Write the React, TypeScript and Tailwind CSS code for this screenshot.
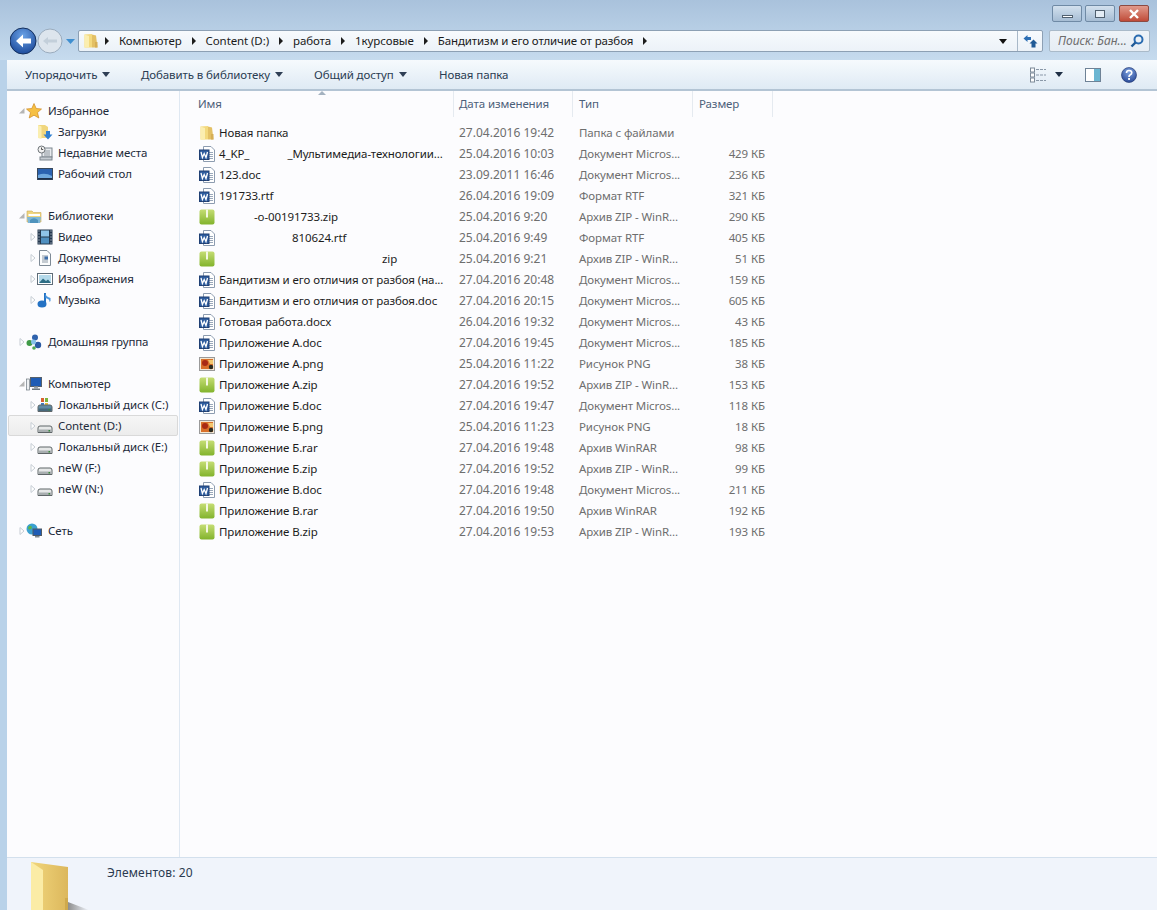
import React from "react";

type FileRow = {
  icon: "folder" | "word" | "zip" | "png";
  name: React.ReactNode;
  date: string;
  kind: string;
  size: string;
};

const WORD = "Документ Micros...";
const ZIP = "Архив ZIP - WinR...";
const RAR = "Архив WinRAR";
const PNG = "Рисунок PNG";

const FILES: FileRow[] = [
  { icon: "folder", name: "Новая папка", date: "27.04.2016 19:42", kind: "Папка с файлами", size: "" },
  {
    icon: "word",
    name: (
      <>
        4_KP_<span className="inline-block w-[38px]" />
        _Мультимедиа-технологии...
      </>
    ),
    date: "25.04.2016 10:03",
    kind: WORD,
    size: "429 КБ",
  },
  { icon: "word", name: "123.doc", date: "23.09.2011 16:46", kind: WORD, size: "236 КБ" },
  { icon: "word", name: "191733.rtf", date: "26.04.2016 19:09", kind: "Формат RTF", size: "321 КБ" },
  {
    icon: "zip",
    name: (
      <>
        <span className="inline-block w-[35px]" />
        -o-00191733.zip
      </>
    ),
    date: "25.04.2016 9:20",
    kind: ZIP,
    size: "290 КБ",
  },
  {
    icon: "word",
    name: (
      <>
        <span className="inline-block w-[73px]" />
        810624.rtf
      </>
    ),
    date: "25.04.2016 9:49",
    kind: "Формат RTF",
    size: "405 КБ",
  },
  {
    icon: "zip",
    name: (
      <>
        <span className="inline-block w-[163px]" />
        zip
      </>
    ),
    date: "25.04.2016 9:21",
    kind: ZIP,
    size: "51 КБ",
  },
  { icon: "word", name: "Бандитизм и его отличия от разбоя (на...", date: "27.04.2016 20:48", kind: WORD, size: "159 КБ" },
  { icon: "word", name: "Бандитизм и его отличия от разбоя.doc", date: "27.04.2016 20:15", kind: WORD, size: "605 КБ" },
  { icon: "word", name: "Готовая работа.docx", date: "26.04.2016 19:32", kind: WORD, size: "43 КБ" },
  { icon: "word", name: "Приложение А.doc", date: "27.04.2016 19:45", kind: WORD, size: "185 КБ" },
  { icon: "png", name: "Приложение А.png", date: "25.04.2016 11:22", kind: PNG, size: "38 КБ" },
  { icon: "zip", name: "Приложение А.zip", date: "27.04.2016 19:52", kind: ZIP, size: "153 КБ" },
  { icon: "word", name: "Приложение Б.doc", date: "27.04.2016 19:47", kind: WORD, size: "118 КБ" },
  { icon: "png", name: "Приложение Б.png", date: "25.04.2016 11:23", kind: PNG, size: "18 КБ" },
  { icon: "zip", name: "Приложение Б.rar", date: "27.04.2016 19:48", kind: RAR, size: "98 КБ" },
  { icon: "zip", name: "Приложение Б.zip", date: "27.04.2016 19:52", kind: ZIP, size: "99 КБ" },
  { icon: "word", name: "Приложение В.doc", date: "27.04.2016 19:48", kind: WORD, size: "211 КБ" },
  { icon: "zip", name: "Приложение В.rar", date: "27.04.2016 19:50", kind: RAR, size: "192 КБ" },
  { icon: "zip", name: "Приложение В.zip", date: "27.04.2016 19:53", kind: ZIP, size: "193 КБ" },
];

function FolderIcon({ size = 16 }: { size?: number }) {
  return (
    <svg width={size} height={size} viewBox="0 0 16 16" className="shrink-0">
      <path d="M1.5 1.5 L9 1 L9 14.5 L1.5 14.5 Z" fill="#f3d97e" />
      <path d="M9 1.5 L13 2.5 L14.5 14.5 L9 14.5 Z" fill="#e3c065" />
      <path d="M1.5 1.5 L6 3 L6 14.5 L1.5 14.5 Z" fill="#fbeeb0" />
      <path d="M12 9 h2.5 v5.5 h-2.5 Z" fill="#d6ae55" />
    </svg>
  );
}

function WordIcon() {
  return (
    <svg width="16" height="16" viewBox="0 0 16 16" className="shrink-0">
      <path d="M4.5 0.5 H12 L15.5 4 V15.5 H4.5 Z" fill="#fff" stroke="#8d9cb0" />
      <path d="M10 6.5h4M10 8.5h4M10 10.5h4M10 12.5h4" stroke="#9aa8ba" />
      <rect x="0.5" y="4" width="9.5" height="9.5" fill="#2f5d9e" stroke="#1f3f73" />
      <path d="M2 6 L3.4 11.5 L5.2 7.5 L7 11.5 L8.5 6" fill="none" stroke="#fff" strokeWidth="1.3" />
    </svg>
  );
}

function ZipIcon() {
  return (
    <svg width="16" height="16" viewBox="0 0 16 16" className="shrink-0">
      <defs>
        <linearGradient id="zipfill" x1="0" y1="0" x2="0" y2="1">
          <stop offset="0" stopColor="#c5dd74" />
          <stop offset="1" stopColor="#82b32c" />
        </linearGradient>
      </defs>
      <rect x="0.5" y="0.5" width="15" height="15" rx="2" fill="url(#zipfill)" />
      <rect x="7" y="0.5" width="2" height="8" fill="#f4f8e4" />
    </svg>
  );
}

function PngIcon() {
  return (
    <svg width="16" height="16" viewBox="0 0 16 16" className="shrink-0">
      <rect x="0.5" y="1.5" width="15" height="13" fill="#f4e7d2" stroke="#9a9a9a" />
      <rect x="2" y="3" width="12" height="10" fill="#d9702a" />
      <circle cx="6" cy="7" r="3" fill="#a82a14" />
      <circle cx="12" cy="11" r="2.2" fill="#2a2a20" />
      <path d="M9 4 h5 v4 h-3 Z" fill="#f3c66d" />
    </svg>
  );
}

function FileIcon({ icon }: { icon: FileRow["icon"] }) {
  if (icon === "folder") return <FolderIcon />;
  if (icon === "word") return <WordIcon />;
  if (icon === "zip") return <ZipIcon />;
  return <PngIcon />;
}

function Caret({ open }: { open?: boolean }) {
  return (
    <svg width="8" height="8" viewBox="0 0 8 8" className="shrink-0">
      {open ? (
        <path d="M1 6.5 L6.5 6.5 L6.5 1 Z" fill="#b5b5b5" />
      ) : (
        <path d="M2 0.5 L6 4 L2 7.5 Z" fill="#fff" stroke="#c6cdd4" />
      )}
    </svg>
  );
}

function Drive({ win }: { win?: boolean }) {
  return (
    <svg width="16" height="16" viewBox="0 0 16 16" className="shrink-0">
      {win && (
        <>
          <path d="M4 1 L7 1 L7 5 L4 5 Z" fill="#d9612f" />
          <path d="M8 1 L11 1 L11 5 L8 5 Z" fill="#7bb33c" />
          <path d="M4 6 L7 6 L7 9 L4 9 Z" fill="#3e7fc4" />
          <path d="M8 6 L11 6 L11 9 L8 9 Z" fill="#e9bf3a" />
        </>
      )}
      <path d="M1 10 Q1 8 3 8 H13 Q15 8 15 10 V14.5 H1 Z" fill={win ? "#5f8aa3" : "#e6e8e8"} stroke="#5f6668" />
      <rect x="1.5" y="11.5" width="13" height="2.5" fill={win ? "#47687c" : "#a8aeb0"} />
      <rect x="11.5" y="12" width="1.5" height="1.5" fill="#3a8a3a" />
    </svg>
  );
}

function TreeGlyph({ name }: { name: string }) {
  switch (name) {
    case "star":
      return (
        <svg width="16" height="16" viewBox="0 0 16 16" className="shrink-0">
          <path d="M8 0.5 L10.2 5.5 L15.5 6 L11.5 9.6 L12.8 15 L8 12.2 L3.2 15 L4.5 9.6 L0.5 6 L5.8 5.5 Z" fill="#f6c044" stroke="#cf8a22" strokeWidth="0.7" />
        </svg>
      );
    case "downloads":
      return (
        <svg width="16" height="16" viewBox="0 0 16 16" className="shrink-0">
          <path d="M1 1 L8 1 L11 3 V14 H1 Z" fill="#f0d67e" />
          <path d="M1 1 L4.5 2.5 V15 L1 14 Z" fill="#faeeb0" />
          <path d="M9 7 H13 V10.5 H15.5 L11 15.5 L6.5 10.5 H9 Z" fill="#2f7fd0" />
        </svg>
      );
    case "recent":
      return (
        <svg width="16" height="16" viewBox="0 0 16 16" className="shrink-0">
          <rect x="5" y="3" width="10" height="9" fill="#e8ebee" stroke="#7d868e" />
          <path d="M7 6h6M7 8h6M7 10h6" stroke="#8f98a0" />
          <rect x="3" y="12" width="12" height="3" fill="#c6ccd2" stroke="#7d868e" />
          <circle cx="4.5" cy="4.5" r="3.5" fill="#f2f2f2" stroke="#6e7478" />
          <path d="M4.5 2.5 V4.5 H6.2" fill="none" stroke="#555" />
        </svg>
      );
    case "desktop":
      return (
        <svg width="16" height="16" viewBox="0 0 16 16" className="shrink-0">
          <rect x="0.5" y="2.5" width="15" height="11" fill="#2b62b0" stroke="#39495c" />
          <path d="M1 9 Q8 6 15 10 V13 H1 Z" fill="#6fa8de" />
          <rect x="1" y="12" width="14" height="1.5" fill="#1d2f4a" />
        </svg>
      );
    case "libraries":
      return (
        <svg width="16" height="16" viewBox="0 0 16 16" className="shrink-0">
          <path d="M1 3 H6 L7.5 4.5 H15 V14 H1 Z" fill="#f0d67e" stroke="#c9a958" strokeWidth="0.6" />
          <path d="M2.5 6 H14 V8 H2.5 Z" fill="#fff" />
          <path d="M1 9 H15 L14 15 H2 Z" fill="#7fb8d8" />
          <path d="M4 15 V12 Q8 8.5 12 12 V15 Z" fill="#4f93bd" />
        </svg>
      );
    case "video":
      return (
        <svg width="16" height="16" viewBox="0 0 16 16" className="shrink-0">
          <rect x="0.5" y="0.5" width="15" height="15" fill="#24384f" />
          <rect x="4" y="1.5" width="8" height="6" fill="#8ec3e8" />
          <rect x="4" y="8.5" width="8" height="6" fill="#4f8fc0" />
          <path d="M1.5 2h1M1.5 5h1M1.5 8h1M1.5 11h1M1.5 14h1M13.5 2h1M13.5 5h1M13.5 8h1M13.5 11h1M13.5 14h1" stroke="#dfe7ee" />
        </svg>
      );
    case "docs":
      return (
        <svg width="16" height="16" viewBox="0 0 16 16" className="shrink-0">
          <path d="M2.5 0.5 H10 L13.5 4 V15.5 H2.5 Z" fill="#fbfcfd" stroke="#7e8a96" />
          <path d="M5 6h6M5 8h6M5 10h6M5 12h6" stroke="#8d99a5" />
          <rect x="7.5" y="6.5" width="3.5" height="3" fill="#3d6da8" />
        </svg>
      );
    case "images":
      return (
        <svg width="16" height="16" viewBox="0 0 16 16" className="shrink-0">
          <rect x="0.5" y="2.5" width="15" height="11" fill="#fff" stroke="#5e6c78" />
          <rect x="2" y="4" width="12" height="8" fill="#b4d9ea" />
          <path d="M2 12 L6 7.5 L9 10 L11 8.5 L14 12 Z" fill="#2e6e86" />
        </svg>
      );
    case "music":
      return (
        <svg width="16" height="16" viewBox="0 0 16 16" className="shrink-0">
          <path d="M8 1 V11" stroke="#2472c4" strokeWidth="2" />
          <ellipse cx="5" cy="12" rx="4.5" ry="3.5" fill="#2472c4" />
          <path d="M8 1 Q9 5 13.5 6 Q14 9 12.5 10 Q13 7 8.5 6 Z" fill="#4b96de" />
        </svg>
      );
    case "home":
      return (
        <svg width="16" height="16" viewBox="0 0 16 16" className="shrink-0">
          <circle cx="9" cy="3.5" r="3" fill="#2f62ad" />
          <circle cx="3.5" cy="9" r="3" fill="#3f9a46" />
          <circle cx="12" cy="11" r="3.2" fill="#2a5aa3" />
          <circle cx="7.5" cy="8" r="2.5" fill="#86c2e8" />
          <circle cx="8" cy="14" r="1.8" fill="#4fa955" />
        </svg>
      );
    case "computer":
      return (
        <svg width="16" height="16" viewBox="0 0 16 16" className="shrink-0">
          <rect x="0.5" y="3" width="3" height="11" fill="#eef0f2" stroke="#6e7880" strokeWidth="0.7" />
          <rect x="4.5" y="1.5" width="11" height="9" fill="#1f5cb5" stroke="#56616c" />
          <rect x="8" y="10.5" width="4" height="2" fill="#9aa3ab" />
          <rect x="6" y="12.5" width="8" height="1.5" fill="#6e7880" />
        </svg>
      );
    case "network":
      return (
        <svg width="16" height="16" viewBox="0 0 16 16" className="shrink-0">
          <circle cx="6" cy="6" r="5.5" fill="#3aa0d0" />
          <path d="M3 3 Q6 2 6 5 Q3 8 2 5 Z" fill="#5cb44a" />
          <rect x="7" y="6" width="8.5" height="6.5" fill="#1f5cb5" stroke="#4e5a66" />
          <rect x="9" y="13" width="4.5" height="1.5" fill="#7e8890" />
        </svg>
      );
    case "drivec":
      return <Drive win />;
    default:
      return <Drive />;
  }
}

function TreeItem({
  label,
  glyph,
  child,
  caret,
  selected,
}: {
  label: string;
  glyph: string;
  child?: boolean;
  caret?: "open" | "closed";
  selected?: boolean;
}) {
  return (
    <div
      className={`flex h-[21px] items-center ${
        selected
          ? "mx-px rounded-[2px] border border-[#d9d9d9] bg-gradient-to-b from-[#f6f6f6] to-[#ececec] pl-[18px]"
          : child
            ? "pl-[20px]"
            : "pl-[9px]"
      }`}
    >
      <span className="flex w-[10px] shrink-0 justify-start pl-[2px]">
        {caret && <Caret open={caret === "open"} />}
      </span>
      <TreeGlyph name={glyph} />
      <span className={`${child ? "ml-[5px]" : "ml-[6px]"} whitespace-nowrap text-[#1d2a3a]`}>{label}</span>
    </div>
  );
}

function Sidebar() {
  return (
    <aside className="w-[173px] shrink-0 border-r border-[#dfe8f2] pt-[9px]">
      <TreeItem label="Избранное" glyph="star" caret="open" />
      <TreeItem label="Загрузки" glyph="downloads" child />
      <TreeItem label="Недавние места" glyph="recent" child />
      <TreeItem label="Рабочий стол" glyph="desktop" child />
      <div className="h-[21px]" />
      <TreeItem label="Библиотеки" glyph="libraries" caret="open" />
      <TreeItem label="Видео" glyph="video" child caret="closed" />
      <TreeItem label="Документы" glyph="docs" child caret="closed" />
      <TreeItem label="Изображения" glyph="images" child caret="closed" />
      <TreeItem label="Музыка" glyph="music" child caret="closed" />
      <div className="h-[21px]" />
      <TreeItem label="Домашняя группа" glyph="home" caret="closed" />
      <div className="h-[21px]" />
      <TreeItem label="Компьютер" glyph="computer" caret="open" />
      <TreeItem label="Локальный диск (C:)" glyph="drivec" child caret="closed" />
      <TreeItem label="Content (D:)" glyph="drive" child caret="closed" selected />
      <TreeItem label="Локальный диск (E:)" glyph="drive" child caret="closed" />
      <TreeItem label="neW (F:)" glyph="drive" child caret="closed" />
      <TreeItem label="neW (N:)" glyph="drive" child caret="closed" />
      <div className="h-[21px]" />
      <TreeItem label="Сеть" glyph="network" caret="closed" />
    </aside>
  );
}

function Crumb({ children }: { children?: string }) {
  return (
    <>
      <svg width="6" height="8" viewBox="0 0 6 8" className="shrink-0">
        <path d="M1 0 L5 4 L1 8 Z" fill="#1c1c1c" />
      </svg>
      {children && <span className="whitespace-nowrap text-[#1a1a1a]">{children}</span>}
    </>
  );
}

function DownTri({ color = "#2f3f55" }: { color?: string }) {
  return (
    <svg width="8" height="5" viewBox="0 0 8 5" className="shrink-0">
      <path d="M0 0 H8 L4 5 Z" fill={color} />
    </svg>
  );
}

function TitleBar() {
  return (
    <header className="h-[60px] shrink-0 bg-gradient-to-b from-[#a9c2dc] to-[#c6dbee]">
      <div className="flex h-[30px] justify-end gap-[3px] pr-[8px] pt-[5px]">
        <div className="flex h-[17px] w-[30px] items-end justify-center rounded-[2px] border border-[#6f8aa5] bg-gradient-to-b from-[#d3e1ee] to-[#a6bdd4] pb-[3px]">
          <span className="h-[3px] w-[11px] border border-[#50606f] bg-white" />
        </div>
        <div className="mr-px flex h-[17px] w-[30px] items-center justify-center rounded-[2px] border border-[#6f8aa5] bg-gradient-to-b from-[#d3e1ee] to-[#a6bdd4]">
          <span className="h-[8px] w-[10px] border border-[#50606f] bg-[#e4edf5]" />
        </div>
        <div className="flex h-[17px] w-[30px] items-center justify-center rounded-[2px] border border-[#8c4a42] bg-gradient-to-b from-[#e09a8c] to-[#bf4a38]">
          <svg width="12" height="10" viewBox="0 0 12 10">
            <path d="M2 1 L10 9 M10 1 L2 9" stroke="#fff" strokeWidth="2.4" />
          </svg>
        </div>
      </div>

      <div className="flex h-[22px] items-center pr-[7px]">
        <div className="flex w-[78px] shrink-0 items-center pl-[10px]">
          <svg width="66" height="28" viewBox="0 0 66 28" className="shrink-0">
            <defs>
              <radialGradient id="backfill" cx="0.5" cy="0.3" r="0.8">
                <stop offset="0" stopColor="#6aa2e6" />
                <stop offset="1" stopColor="#123f92" />
              </radialGradient>
            </defs>
            <circle cx="40" cy="14" r="12" fill="#dde5ed" stroke="#9aacbe" />
            <path d="M33 14 L38 10 V12.5 H47 V15.5 H38 V18 Z" fill="#c3cfda" />
            <circle cx="13" cy="14" r="13" fill="url(#backfill)" stroke="#14305e" />
            <path d="M6 14 L13 7.5 V11.5 H21 V16.5 H13 V20.5 Z" fill="#fff" />
            <path d="M56 12 H65 L60.5 17 Z" fill="#3f8fd0" />
          </svg>
        </div>

        <div className="flex h-[22px] flex-1 items-center gap-[5px] rounded-[2px] border border-[#8da0b4] bg-gradient-to-b from-[#f7fafd] to-[#ecf2f8] pl-[4px]">
          <FolderIcon size={16} />
          <span className="flex items-center gap-[9px]">
            <Crumb>Компьютер</Crumb>
            <Crumb>Content (D:)</Crumb>
            <Crumb>работа</Crumb>
            <Crumb>1курсовые</Crumb>
            <Crumb>Бандитизм и его отличие от разбоя</Crumb>
            <Crumb />
          </span>
          <span className="ml-auto flex h-full items-center">
            <span className="mr-[10px]">
              <DownTri color="#111" />
            </span>
            <span className="flex h-full w-[25px] items-center justify-center border-l border-[#a8b8c8]">
              <svg width="15" height="14" viewBox="0 0 15 14">
                <path d="M0.5 4.5 L4.5 1 V3 H8 V6 H4.5 V8 Z" fill="#2d6fb5" />
                <path d="M10.5 5.5 L14.5 9.5 H12.5 V13.5 H8.5 V9.5 H6.5 Z" fill="#1f5a96" />
              </svg>
            </span>
          </span>
        </div>

        <div className="ml-[6px] flex h-[22px] w-[101px] shrink-0 items-center justify-between rounded-[2px] border border-[#a9bac9] bg-gradient-to-b from-[#eef3f8] to-[#e6edf4] pl-[8px] pr-[5px]">
          <span className="whitespace-nowrap text-[12px] italic tracking-normal text-[#6d6d6d]">Поиск: Бан...</span>
          <svg width="14" height="14" viewBox="0 0 14 14" className="shrink-0">
            <circle cx="8.5" cy="5.5" r="4" fill="none" stroke="#2a6bb0" strokeWidth="2" />
            <path d="M5.5 8.5 L1.5 12.5" stroke="#1f5a96" strokeWidth="2.4" />
          </svg>
        </div>
      </div>
    </header>
  );
}

function ToolButton({ label, width }: { label: string; width: string }) {
  return (
    <div className={`flex items-center gap-[5px] ${width}`}>
      <span className="whitespace-nowrap text-[#2a3c52]">{label}</span>
      <DownTri />
    </div>
  );
}

function Toolbar() {
  return (
    <div className="flex h-[31px] shrink-0 items-center border-b-2 border-[#b3c4d4] bg-gradient-to-b from-[#f6fafd] to-[#dfeaf4] pl-[18px] pr-[20px]">
      <ToolButton label="Упорядочить" width="w-[116px]" />
      <ToolButton label="Добавить в библиотеку" width="w-[173px]" />
      <ToolButton label="Общий доступ" width="w-[125px]" />
      <span className="whitespace-nowrap text-[#2a3c52]">Новая папка</span>

      <div className="ml-auto flex items-center">
        <svg width="16" height="16" viewBox="0 0 16 16" className="shrink-0">
          <path d="M6 2.5h10M6 8h10M6 13.5h10" stroke="#8a98a8" strokeDasharray="3 1" />
          <rect x="0.5" y="1" width="4" height="4" fill="#fff" stroke="#7d8a98" />
          <rect x="0.5" y="6" width="4" height="4" fill="#fff" stroke="#7d8a98" />
          <rect x="0.5" y="11" width="4" height="4" fill="#fff" stroke="#7d8a98" />
        </svg>
        <span className="ml-[9px]">
          <DownTri color="#1f2f45" />
        </span>
        <svg width="16" height="14" viewBox="0 0 16 14" className="ml-[22px] shrink-0">
          <rect x="0.5" y="0.5" width="15" height="13" fill="#fff" stroke="#6e8296" />
          <rect x="9" y="1" width="6" height="12" fill="#6cb6d2" />
        </svg>
        <svg width="16" height="16" viewBox="0 0 16 16" className="ml-[20px] shrink-0">
          <defs>
            <radialGradient id="helpfill" cx="0.5" cy="0.3" r="0.8">
              <stop offset="0" stopColor="#7fa3e0" />
              <stop offset="1" stopColor="#1f3f8f" />
            </radialGradient>
          </defs>
          <circle cx="8" cy="8" r="7.5" fill="url(#helpfill)" stroke="#1a2f6a" strokeWidth="0.6" />
          <path d="M5.5 6 Q5.5 3.5 8 3.5 Q10.8 3.5 10.8 5.8 Q10.8 7.2 9 8 Q8 8.6 8 10" fill="none" stroke="#fff" strokeWidth="1.6" />
          <rect x="7.1" y="11" width="1.9" height="1.9" fill="#fff" />
        </svg>
      </div>
    </div>
  );
}

function HeaderCell({ label, width }: { label: string; width: string }) {
  return (
    <div className={`flex h-full items-center border-r border-[#e5eaf0] ${width}`}>
      <span className="whitespace-nowrap text-[#4c607a]">{label}</span>
    </div>
  );
}

function FileList() {
  return (
    <main className="relative min-w-0 flex-1">
      <svg width="8" height="4" viewBox="0 0 8 4" className="absolute left-[138px] top-0">
        <path d="M0 4 L4 0 L8 4 Z" fill="#a4b2c0" />
      </svg>
      <div className="flex h-[26px] pl-[18px]">
        <HeaderCell label="Имя" width="w-[256px]" />
        <HeaderCell label="Дата изменения" width="w-[119px] pl-[5px]" />
        <HeaderCell label="Тип" width="w-[120px] pl-[6px]" />
        <HeaderCell label="Размер" width="w-[80px] pl-[6px]" />
      </div>
      <div className="pt-[5px]">
        {FILES.map((f, i) => (
          <div key={i} className="flex h-[21px] items-center pl-[19px]">
            <div className="flex w-[255px] items-center">
              <FileIcon icon={f.icon} />
              <span className="ml-[4px] whitespace-nowrap text-[#1c1c1c]">{f.name}</span>
            </div>
            <div className="w-[120px] whitespace-nowrap pl-[5px] text-[12px] tracking-normal text-[#6e6e6e]">{f.date}</div>
            <div className="w-[120px] whitespace-nowrap pl-[5px] text-[#6e6e6e]">{f.kind}</div>
            <div className="w-[71px] whitespace-nowrap text-right text-[#6e6e6e]">{f.size}</div>
          </div>
        ))}
      </div>
    </main>
  );
}

function StatusBar() {
  return (
    <footer className="flex h-[53px] shrink-0 overflow-hidden border-t border-[#d3e0ed] bg-[#f0f4fb]">
      <svg width="70" height="52" viewBox="0 0 70 52" className="ml-[22px] shrink-0">
        <defs>
          <linearGradient id="bigback" x1="0" y1="0" x2="1" y2="0">
            <stop offset="0" stopColor="#f1d67c" />
            <stop offset="1" stopColor="#dcb75c" />
          </linearGradient>
          <linearGradient id="bigshadow" x1="0" y1="0" x2="1" y2="0">
            <stop offset="0" stopColor="#8e8e8e" />
            <stop offset="1" stopColor="#f0f4fb" />
          </linearGradient>
        </defs>
        <path d="M39 44 L60 52 H39 Z" fill="url(#bigshadow)" />
        <path d="M2 4 L39 9 V52 H2 Z" fill="url(#bigback)" />
        <path d="M2 4 L14 12 V52 H2 Z" fill="#fbeca6" />
        <path d="M36 40 H39 V52 H36 Z" fill="#cfa94c" />
      </svg>
      <span className="ml-[8px] mt-[6px] whitespace-nowrap text-[12px] tracking-[0.15px] text-[#2a3a50]">Элементов: 20</span>
    </footer>
  );
}

export default function App() {
  return (
    <div className="flex h-[910px] w-[1157px] flex-col overflow-hidden bg-[#b9d2e9] font-['Noto_Sans','Open_Sans',sans-serif] text-[11.5px] tracking-[-0.1px]">
      <TitleBar />
      <div className="ml-[7px] flex min-h-0 flex-1 flex-col">
        <Toolbar />
        <div className="flex min-h-0 flex-1 bg-[#fcfcfe]">
          <Sidebar />
          <FileList />
        </div>
        <StatusBar />
      </div>
    </div>
  );
}
